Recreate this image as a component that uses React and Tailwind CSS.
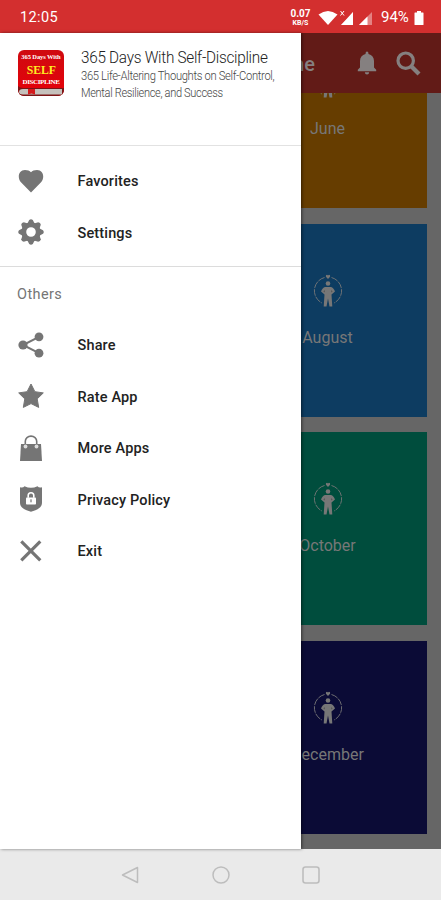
import React from 'react';
import clsx from 'clsx';

const mainItems = [
  { label: 'Favorites', Icon: HeartIcon },
  { label: 'Settings', Icon: GearIcon },
];

const otherItems = [
  { label: 'Share', Icon: ShareIcon },
  { label: 'Rate App', Icon: StarIcon },
  { label: 'More Apps', Icon: BagIcon },
  { label: 'Privacy Policy', Icon: ShieldIcon },
  { label: 'Exit', Icon: CloseIcon },
];

const months = [
  { name: 'June', color: 'bg-[#663d00]' },
  { name: 'August', color: 'bg-[#0d3c61]' },
  { name: 'October', color: 'bg-[#004d3d]' },
  { name: 'December', color: 'bg-[#0b0b36]' },
];

function HeartIcon() {
  return (
    <svg viewBox="0 0 26 26" className="h-[26px] w-[26px]" fill="currentColor">
      <path d="M13 24.6 L3.2 14.6 C-1 10.2 .3 2 7 2 c2.800 0 4.600 .7 6 2.300 C14.400 2.700 16.200 2 19 2 c6.700 0 8 8.200 3.800 12.600 Z" />
    </svg>
  );
}

function GearIcon() {
  return (
    <svg viewBox="0 0 26 26" className="h-[26px] w-[26px]" fill="currentColor">
      <path
        fillRule="evenodd"
        d="M13 3.300 a9.700 9.700 0 1 0 0 19.400 a9.700 9.700 0 1 0 0 -19.400 Z M13 8.200 a4.800 4.800 0 1 1 0 9.600 a4.800 4.800 0 1 1 0 -9.600 Z"
      />
      {[0, 45, 90, 135, 180, 225, 270, 315].map((angle) => (
        <path key={angle} transform={`rotate(${angle} 13 13)`} d="M9.300 4.800 L11.200 1 Q13 -.5 14.800 1 L16.700 4.800 Z" />
      ))}
    </svg>
  );
}

function ShareIcon() {
  return (
    <svg viewBox="0 0 26 26" className="h-[26px] w-[26px]" fill="currentColor">
      <path d="M21 4.800 L5 13 L21 21.200" fill="none" stroke="currentColor" strokeWidth="2" />
      <circle cx="21" cy="4.800" r="4.400" />
      <circle cx="5" cy="13" r="4.600" />
      <circle cx="21" cy="21.200" r="4.400" />
    </svg>
  );
}

function StarIcon() {
  return (
    <svg viewBox="0 0 26 26" className="h-[26px] w-[26px]" fill="currentColor" stroke="currentColor" strokeWidth="1" strokeLinejoin="round">
      <path d="M13 1 L16.900 8.700 L25.300 9.900 L19.200 15.900 L20.700 24.400 L13 20.600 L5.300 24.400 L6.800 15.900 L.7 9.900 L9.100 8.700 Z" />
    </svg>
  );
}

function BagIcon() {
  return (
    <svg viewBox="0 0 26 26" className="h-[26px] w-[26px]" fill="currentColor">
      <path d="M3 9 H23 L24 26 H2 Z" />
      <path d="M7.300 11 V6.300 a5.700 5.200 0 0 1 11.400 0 V11" fill="none" stroke="currentColor" strokeWidth="1.600" />
      <circle cx="7.500" cy="11.500" r="1.900" fill="#ddd" />
      <circle cx="18.500" cy="11.500" r="1.900" fill="#ddd" />
    </svg>
  );
}

function ShieldIcon() {
  return (
    <svg viewBox="0 0 26 26" className="h-[26px] w-[26px]" fill="currentColor">
      <path d="M2 1.300 Q5 2.200 6.500 .3 Q13 3.400 19.500 .3 Q21 2.200 24 1.300 V16.500 C24 22.500 18 24 13 25.800 C8 24 2 22.500 2 16.500 Z" />
      <rect x="8" y="11.500" width="10" height="7" rx=".8" fill="#fff" />
      <path d="M10.200 11.800 V9.500 a2.800 2.800 0 0 1 5.600 0 V11.800" fill="none" stroke="#fff" strokeWidth="1.600" />
      <rect x="12.400" y="13.300" width="1.200" height="3" />
    </svg>
  );
}

function CloseIcon() {
  return (
    <svg viewBox="0 0 26 26" className="h-[26px] w-[26px]" fill="none" stroke="currentColor" strokeWidth="3.200">
      <path d="M3.300 3.300 L22.300 22.300 M22.300 3.300 L3.300 22.300" />
    </svg>
  );
}

function PersonIcon() {
  return (
    <svg viewBox="0 0 30 34" className="h-[34px] w-[30px]" fill="#777">
      <path d="M11.500 3.500 A13.700 13.700 0 0 0 9 29 M18.500 3.500 A13.700 13.700 0 0 1 21 29" fill="none" stroke="#777" strokeWidth=".9" strokeDasharray="7 1" />
      <path d="M15 5 L12.900 2.800 Q12.500 .8 14 .8 L15 1.500 L16 .8 Q17.500 .8 17.100 2.800 Z" />
      <circle cx="15" cy="9.500" r="2.300" />
      <path d="M12 13 H18 Q20.500 13.500 22 17.500 L18.500 20.500 L18.800 25 L19.300 32.500 H16.500 L15 24.500 L13.500 32.500 H10.700 L11.200 25 L11.500 20.500 L8 17.500 Q9.500 13.500 12 13 Z" />
      <path d="M11.500 16 L10.500 17.500 L11.700 18.500 Z M18.500 16 L19.500 17.500 L18.300 18.500 Z" fill="#000" fillOpacity=".4" />
    </svg>
  );
}

function StatusBar() {
  return (
    <div className="flex h-[33px] shrink-0 items-center bg-[#d32f2f] pt-[2px] pr-[17px] pl-5 text-white">
      <span className="text-[14.5px] tracking-[0.4px]">12:05</span>
      <div className="ml-auto flex items-center">
        <div className="flex w-[21px] flex-col items-center font-bold">
          <span className="text-[10px] leading-[10px]">0.07</span>
          <span className="text-[7px] leading-[8px]">KB/S</span>
        </div>
        <svg viewBox="0 0 20 16" className="ml-[7px] h-4 w-5" fill="#fff">
          <path d="M10 15 L.5 4.500 Q10 -2.500 19.500 4.500 Z" />
        </svg>
        <svg viewBox="0 0 14 16" className="ml-[2px] h-4 w-[14px]">
          <path d="M13 2 V15 H1 Z" fill="#fff" fillOpacity=".35" />
          <path d="M13 2 V15 H1 L8 7.500 Z" fill="#fff" />
          <path d="M.5 1 L4 5.500 M4 1 L.5 5.500" stroke="#fff" strokeWidth="1" />
        </svg>
        <svg viewBox="0 0 14 16" className="ml-[5px] h-4 w-[14px]">
          <path d="M13 2 V15 H0 Z" fill="#fff" fillOpacity=".4" />
          <path d="M8.500 6.500 V15 H0 Z" fill="#fff" />
        </svg>
        <span className="ml-[8px] w-[29px] text-[15px]">94%</span>
        <svg viewBox="0 0 10 16" className="ml-[4px] h-4 w-[10px]" fill="#fff">
          <path d="M3 1 H7 V2.500 H9 Q9.500 2.500 9.500 3 V14.500 Q9.500 15 9 15 H1 Q.5 15 .5 14.500 V3 Q.5 2.500 1 2.500 H3 Z" />
        </svg>
      </div>
    </div>
  );
}

function AppBar() {
  return (
    <div className="flex h-[60px] shrink-0 items-center justify-end bg-[#621b17] pr-5 text-[#858080]">
      <span className="mr-[42px] pt-[2px] text-[20px] font-medium">Home</span>
      <svg viewBox="0 0 20 24" className="mr-[19px] h-6 w-5" fill="currentColor">
        <path d="M.8 20.200 V18.800 L3 16.500 V10 C3 6.300 5 4 8.500 3 Q8.500 .6 10 .6 Q11.500 .6 11.500 3 C15 4 17 6.300 17 10 V16.500 L19.200 18.800 V20.200 Z" />
        <path d="M7.800 21.300 H12.200 Q12 23.600 10 23.600 Q8 23.600 7.800 21.300 Z" />
      </svg>
      <svg viewBox="0 0 25 25" className="h-[25px] w-[25px]" fill="none" stroke="currentColor">
        <circle cx="9.700" cy="9.700" r="7.700" strokeWidth="3.200" />
        <path d="M15.500 15.500 L23 23" strokeWidth="4.200" />
      </svg>
    </div>
  );
}

function MonthCard({ name, color }) {
  return (
    <div className={clsx('flex h-[193px] w-[198px] shrink-0 flex-col items-center pt-[50px]', color)}>
      <PersonIcon />
      <span className="mt-[18px] text-[16px] leading-6 text-[#777]">{name}</span>
    </div>
  );
}

function BookLogo() {
  return (
    <div className="flex h-[46px] w-[46px] flex-col items-center overflow-hidden rounded-[6px] bg-gradient-to-b from-[#cf0a10] to-[#e60008] font-['Liberation_Serif',serif] font-bold whitespace-nowrap text-white">
      <span className="mt-[3px] text-[6.500px] leading-[8px] tracking-[-0.1px]">365 Days With</span>
      <span className="mt-[2px] scale-x-90 text-[13px] leading-[13px] text-[#ffee22]">SELF</span>
      <span className="mt-[2px] text-[7px] leading-[8px] tracking-[-0.4px]">DISCIPLINE</span>
      <svg viewBox="0 0 46 10" className="h-[10px] w-[46px] shrink-0">
        <path d="M0 0 Q2 2 5 2 H46 V10 H0 Z" fill="#7b1516" />
        <path d="M5 3 H44 V8.500 H5 Q1 8.500 1 6 Q1 3 5 3 Z" fill="#c5c1bc" />
        <path d="M10 3 H17 V8.500 L13.500 7.500 L10 8.500 Z" fill="#d51a1c" />
      </svg>
    </div>
  );
}

function MenuItem({ label, Icon }) {
  return (
    <button className="flex h-[51.500px] w-full items-center pl-[17.500px] text-[#757575]">
      <Icon />
      <span className="ml-[34px] pt-[3px] text-[14.500px] font-medium tracking-[0.15px] text-[#222]">{label}</span>
    </button>
  );
}

function Drawer() {
  return (
    <aside className="absolute top-[33px] left-0 flex h-[816px] w-[301px] flex-col bg-white shadow-[1px_0_3px_rgba(0,0,0,0.5)]">
      <div className="flex h-[113px] shrink-0 border-b border-[#e2e2e2] pt-[17px] pl-[18px]">
        <BookLogo />
        <div className="ml-[17px] w-[200px] whitespace-nowrap">
          <h1 className="-mt-[4px] w-max origin-left scale-x-[0.9] text-[17px] leading-[22px] font-light tracking-[-0.3px] text-[#222]">
            365 Days With Self-Discipline
          </h1>
          <p className="w-max origin-left scale-x-[0.935] text-[12px] leading-[17px] font-light tracking-[-0.35px] text-[#444]">
            365 Life-Altering Thoughts on Self-Control,
          </p>
          <p className="w-max origin-left scale-x-[0.92] text-[12px] leading-[17px] font-light tracking-[-0.35px] text-[#444]">
            Mental Resilience, and Success
          </p>
        </div>
      </div>
      <div className="h-[121px] shrink-0 border-b border-[#dcdcdc] pt-[9px]">
        {mainItems.map((item) => (
          <MenuItem key={item.label} {...item} />
        ))}
      </div>
      <div className="flex h-[52px] items-center pt-[3px] pl-[17px] text-[14.500px] tracking-[0.4px] text-[#757575]">Others</div>
      {otherItems.map((item) => (
        <MenuItem key={item.label} {...item} />
      ))}
    </aside>
  );
}

function NavBar() {
  return (
    <div className="flex h-[51px] shrink-0 items-center justify-center gap-[72.500px] bg-[#eaeaea]">
      <svg viewBox="0 0 18 18" className="h-[18px] w-[18px]" fill="none" stroke="#bdbdbd" strokeWidth="1.500" strokeLinejoin="round">
        <path d="M16.500 1.500 V16.500 L1.500 9 Z" />
      </svg>
      <svg viewBox="0 0 18 18" className="h-[18px] w-[18px]" fill="none" stroke="#bdbdbd" strokeWidth="1.500">
        <circle cx="9" cy="9" r="8" />
      </svg>
      <svg viewBox="0 0 18 18" className="h-[18px] w-[18px]" fill="none" stroke="#bdbdbd" strokeWidth="1.600">
        <rect x="1" y="1" width="16" height="16" rx="2.500" />
      </svg>
    </div>
  );
}

function App() {
  return (
    <div className="relative flex h-[900px] w-[441px] flex-col overflow-hidden bg-white font-[Roboto,sans-serif]">
      <StatusBar />
      <AppBar />
      {/* Month grid, dimmed under the open drawer */}
      <div className="flex h-[756px] flex-col items-end justify-end gap-[15.500px] overflow-hidden bg-[#666] pr-[14.500px] pb-[15.500px]">
        {months.map((month) => (
          <MonthCard key={month.name} {...month} />
        ))}
      </div>
      <NavBar />
      <Drawer />
    </div>
  );
}

export default App;
